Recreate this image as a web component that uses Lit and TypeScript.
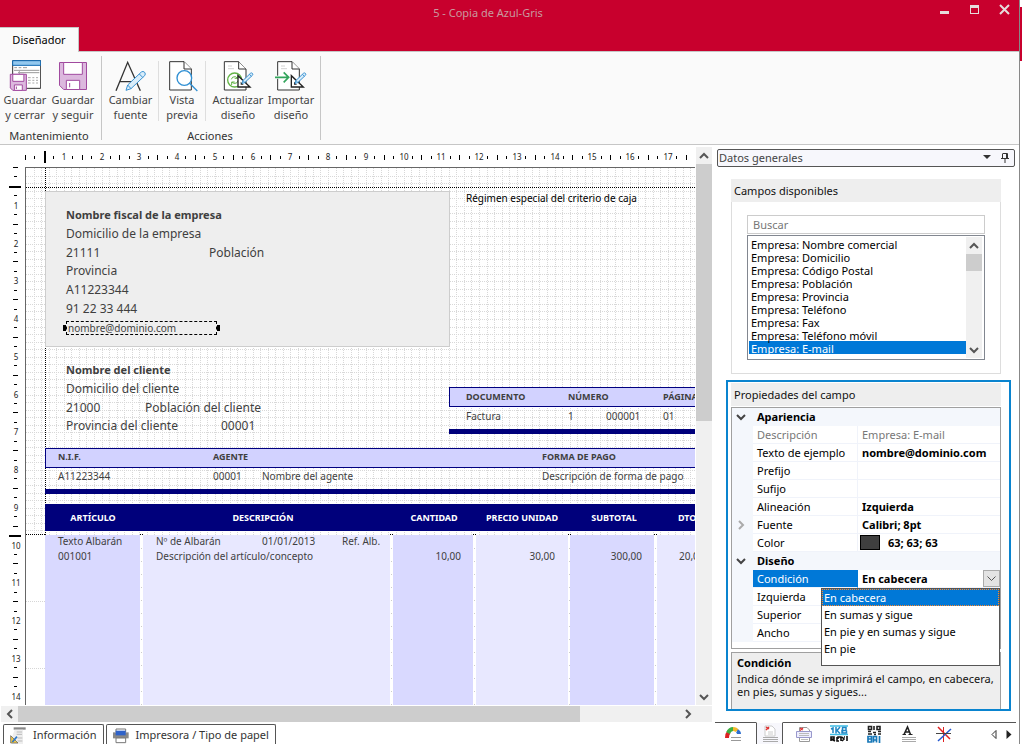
import { LitElement, html, svg, css } from "lit";
import { customElement, state } from "lit/decorators.js";
import { classMap } from "lit/directives/class-map.js";
import { styleMap } from "lit/directives/style-map.js";

/* ---------- shared drawings ---------- */

const floppy = (x: number, y: number, s: number) => svg`
  <g transform="translate(${x} ${y}) scale(${s / 84})" fill="#dcb8de" stroke="#a14a9f" stroke-width=${(3 * 84) / s}>
    <path d="M1.500 1.500H82.500V82.500H14L1.500 70Z" />
    <path d="M14 1.500H70V37H14Z" fill="#fff" />
    <path d="M22 55H62V82.500H22Z" fill="#fff" />
    <path d="M32 63V76" />
  </g>`;

const sheet = (x: number) => svg`
  <path d="M${x} 185h43l22 22v63h-65z" fill="#fff" stroke="#333" stroke-width="3" />
  <path d="M${x + 43} 185v22h22" fill="#fff" stroke="#333" stroke-width="3" />`;

const pencil = (x: number, y: number, s: number) => svg`
  <g transform="translate(${x} ${y}) scale(${s})" fill="#d9edfa" stroke="#3a92d2" stroke-width=${3 / s} stroke-linejoin="round">
    <path d="M0 58L5 42L46 3Q51 -1 56 4Q60 9 56 14L15 53Z" />
    <path d="M5 42L15 53M40 9L50 19" />
  </g>`;

const square = (x: number) => svg`
  <path d="M${x} 227V261H${x + 36}Z" fill="#fff" stroke="#222" stroke-width="4" />
  <path d="M${x + 8} 245V254H${x + 17}Z" fill="#222" />`;

const ICONS: Record<string, unknown> = {
  saveClose: svg`<svg viewBox="27 180 96 96">
    <path d="M38 182H122V265H38Z" fill="#fff" stroke="#333" stroke-width="3" />
    <path d="M38 182H122V196H38Z" fill="#93c8ee" stroke="#1069b2" stroke-width="3" />
    <path d="M43 203h8m5 0h8m5 0h12M42 211H118M54 218H118" stroke="#999" stroke-width="3" fill="none" />
    <path d="M58 211V225M84 233h8m5 0h6m5 0h6M84 241h8m5 0h6m5 0h6M84 249h8m5 0h6m5 0h6" stroke="#aaa" stroke-width="3" />
    ${floppy(30, 222, 50)}</svg>`,
  save: svg`<svg viewBox="171 180 96 96">${floppy(177, 186, 84)}</svg>`,
  font: svg`<svg viewBox="342 180 96 96">
    <path d="M345 272L380 187L418 272M357 245H406" fill="none" stroke="#333" stroke-width="4" />
    ${pencil(375, 213, 1)}</svg>`,
  preview: svg`<svg viewBox="497 180 96 96">
    ${sheet(508)}
    <circle cx="552" cy="234" r="22" fill="#fff" stroke="#2f8fd3" stroke-width="4" />
    <path d="M568 250L591 273" stroke="#2f8fd3" stroke-width="4" /></svg>`,
  refresh: svg`<svg viewBox="666 180 96 96">
    ${sheet(673)}
    <path d="M684 198h12M684 206h18" stroke="#bbb" stroke-width="2" />
    <g fill="none" stroke="#63b446" stroke-width="4">
      <circle cx="704" cy="240" r="21" />
      <path d="M694 238Q696 229 706 230L712 234M713 226V235H704M714 242Q712 252 702 250L696 247M695 255V246H704" stroke-width="3" />
    </g>
    ${square(714)}${pencil(726, 218, 0.56)}</svg>`,
  importar: svg`<svg viewBox="825 180 96 96">
    ${sheet(833)}
    <path d="M843 198h12M843 206h18" stroke="#bbb" stroke-width="2" />
    <path d="M822 232H865M851 216L866 232L851 248" fill="none" stroke="#fff" stroke-width="9" />
    <path d="M825 232H865M851 217L866 232L851 247" fill="none" stroke="#33a55c" stroke-width="5" />
    ${square(874)}${pencil(885, 218, 0.56)}</svg>`,
};

const chevron = (dir: "up" | "down" | "left" | "right") => {
  const d = {
    up: "M1 7L5 3L9 7",
    down: "M1 3L5 7L9 3",
    left: "M7 1L3 5L7 9",
    right: "M3 1L7 5L3 9",
  }[dir];
  return html`<svg class="chev" viewBox="0 0 10 10" width="10" height="10" aria-hidden="true">
    <path d=${d} fill="none" stroke="currentColor" stroke-width="2" />
  </svg>`;
};

const base = css`
  :host {
    box-sizing: border-box;
    font-family: "Noto Sans", "Open Sans", sans-serif;
    font-size: 11px;
    color: #1a1a1a;
  }
  * {
    box-sizing: border-box;
  }
  button,
  input,
  select {
    font: inherit;
    color: inherit;
    margin: 0;
    padding: 0;
    border: 0;
    border-radius: 0;
    background: none;
    outline: none;
  }
  .chev {
    display: block;
    flex: none;
  }
`;

/* ---------- title bar ---------- */

@customElement("title-bar")
export class TitleBar extends LitElement {
  static styles = [
    base,
    css`
      :host {
        display: grid;
        grid-template-columns: 1fr auto 1fr;
        height: 51px;
        background: #c8002d;
      }
      .tab {
        justify-self: start;
        align-self: end;
        height: 25px;
        width: 79px;
        padding: 0 0 2px;
        margin-bottom: -1px;
        background: #fafafa;
        border-top: 1px solid #c6c6c6;
        border-right: 1px solid #c6c6c6;
        color: #000;
        z-index: 1;
      }
      .title {
        margin: 0;
        padding-right: 43px;
        font-size: 11px;
        font-weight: 400;
        line-height: 26px;
        color: #c99a9f;
      }
      .controls {
        display: flex;
        justify-content: flex-end;
        align-items: flex-start;
        gap: 14px;
        padding: 1px 7px 0 0;
      }
      .controls button {
        width: 16px;
        height: 16px;
      }
      svg {
        display: block;
      }
    `,
  ];
  render() {
    return html`
      <button class="tab" role="tab" aria-selected="true">Diseñador</button>
      <h1 class="title">5 - Copia de Azul-Gris</h1>
      <div class="controls">
        <button aria-label="Minimizar">
          <svg width="16" height="16"><path d="M4 10h9v3H4z" fill="#e6dcdc" /></svg>
        </button>
        <button aria-label="Maximizar">
          <svg width="16" height="16"><path d="M4 4h9v9H4zM5 7v5h7V7z" fill="#e6dcdc" fill-rule="evenodd" /></svg>
        </button>
        <button aria-label="Cerrar">
          <svg width="16" height="16"><path d="M4 4L13 13M13 4L4 13" stroke="#e6dcdc" stroke-width="2" /></svg>
        </button>
      </div>
    `;
  }
}

/* ---------- ribbon ---------- */

@customElement("ribbon-bar")
export class RibbonBar extends LitElement {
  static styles = [
    base,
    css`
      :host {
        display: flex;
        height: 94px;
        background: #fafafa;
        border-top: 1px solid #c6c6c6;
        border-bottom: 1px solid #c6c6c6;
      }
      .group {
        display: grid;
        grid-template-rows: 1fr 13px;
        margin: 4px 0;
        border-right: 1px solid #c6c6c6;
        padding-left: 1px;
      }
      .maint {
        padding-right: 4px;
      }
      .actions {
        padding-right: 3px;
      }
      .row {
        display: flex;
      }
      .row button {
        display: flex;
        flex-direction: column;
        align-items: center;
        padding-top: 4px;
        width: 48px;
        line-height: 15px;
        color: #444;
        text-align: center;
      }
      .actions button {
        width: 52px;
        margin-left: 1px;
      }
      .actions button.tight {
        width: 46px;
        margin-left: 0;
      }
      .actions button.first {
        width: 55px;
        margin-left: 0;
      }
      .row svg {
        width: 32px;
        height: 32px;
        display: block;
      }
      .lbl {
        white-space: nowrap;
      }
      .sep {
        width: 1px;
        margin: 5px 0 6px;
        background: #dedede;
      }
      .wide {
        margin-right: 5px;
      }
      .name {
        text-align: center;
        line-height: 17px;
        color: #333;
      }
    `,
  ];
  private btn(icon: string, a: string, b: string, cls = "") {
    return html`<button class=${cls}>${ICONS[icon]}<span class="lbl">${a}<br />${b}</span></button>`;
  }
  render() {
    return html`
      <div class="group maint">
        <div class="row">
          ${this.btn("saveClose", "Guardar", "y cerrar")} ${this.btn("save", "Guardar", "y seguir")}
        </div>
        <div class="name">Mantenimiento</div>
      </div>
      <div class="group actions">
        <div class="row">
          ${this.btn("font", "Cambiar", "fuente", "first")}
          <span class="sep"></span>
          ${this.btn("preview", "Vista", "previa", "tight")}
          <span class="sep wide"></span>
          ${this.btn("refresh", "Actualizar", "diseño")} ${this.btn("importar", "Importar", "diseño")}
        </div>
        <div class="name">Acciones</div>
      </div>
    `;
  }
}

/* ---------- document designer ---------- */

const CM = 37.75;
const GRID = CM / 5;

interface Box {
  x: number;
  y: number;
  w?: number;
  h?: number;
  kind: string;
}
interface Label {
  x: number;
  y: number;
  t: string;
  k?: string;
}

/* A box without a width or a height runs on to that edge of the canvas. */
const BOXES: Box[] = [
  { x: 19, y: 23, w: 405, h: 156, kind: "panel" },
  { x: 423, y: 219, h: 20, kind: "head" },
  { x: 423, y: 261, h: 5, kind: "navy" },
  { x: 19, y: 280, h: 20, kind: "head" },
  { x: 19, y: 321, h: 5, kind: "navy" },
  { x: 19, y: 336, h: 27, kind: "navy" },
  { x: 0, y: 367, kind: "blank" },
  { x: 19, y: 367, w: 95, kind: "dark" },
  { x: 117, y: 367, w: 247, kind: "light" },
  { x: 367, y: 367, w: 80, kind: "dark" },
  { x: 450, y: 367, w: 92, kind: "light" },
  { x: 544, y: 367, w: 84, kind: "dark" },
  { x: 631, y: 367, kind: "light" },
];

const LABELS: Label[] = [
  { x: 440, y: 30, t: "Régimen especial del criterio de caja", k: "small black" },
  { x: 40, y: 47, t: "Nombre fiscal de la empresa", k: "name" },
  { x: 40, y: 66, t: "Domicilio de la empresa" },
  { x: 40, y: 85, t: "21111" },
  { x: 183, y: 85, t: "Población" },
  { x: 40, y: 103, t: "Provincia" },
  { x: 40, y: 122, t: "A11223344" },
  { x: 40, y: 141, t: "91 22 33 444" },
  { x: 40, y: 202, t: "Nombre del cliente", k: "name" },
  { x: 40, y: 221, t: "Domicilio del cliente" },
  { x: 40, y: 240, t: "21000" },
  { x: 119, y: 240, t: "Población del cliente" },
  { x: 40, y: 258, t: "Provincia del cliente" },
  { x: 195, y: 258, t: "00001" },
  { x: 440, y: 229, t: "DOCUMENTO", k: "caps" },
  { x: 542, y: 229, t: "NÚMERO", k: "caps" },
  { x: 637, y: 229, t: "PÁGINA", k: "caps" },
  { x: 440, y: 248, t: "Factura", k: "small" },
  { x: 542, y: 248, t: "1", k: "small" },
  { x: 580, y: 248, t: "000001", k: "small" },
  { x: 637, y: 248, t: "01", k: "small" },
  { x: 32, y: 289, t: "N.I.F.", k: "caps" },
  { x: 187, y: 289, t: "AGENTE", k: "caps" },
  { x: 516, y: 289, t: "FORMA DE PAGO", k: "caps" },
  { x: 32, y: 308, t: "A11223344", k: "small" },
  { x: 187, y: 308, t: "00001", k: "small" },
  { x: 236, y: 308, t: "Nombre del agente", k: "small" },
  { x: 516, y: 308, t: "Descripción de forma de pago", k: "small" },
  { x: 67, y: 350, t: "ARTÍCULO", k: "caps white mid" },
  { x: 237, y: 350, t: "DESCRIPCIÓN", k: "caps white mid" },
  { x: 408, y: 350, t: "CANTIDAD", k: "caps white mid" },
  { x: 496, y: 350, t: "PRECIO UNIDAD", k: "caps white mid" },
  { x: 588, y: 350, t: "SUBTOTAL", k: "caps white mid" },
  { x: 652, y: 350, t: "DTO.", k: "caps white" },
  { x: 32, y: 373, t: "Texto Albarán", k: "small" },
  { x: 32, y: 388, t: "001001", k: "small" },
  { x: 130, y: 373, t: "Nº de Albarán", k: "small" },
  { x: 236, y: 373, t: "01/01/2013", k: "small" },
  { x: 316, y: 373, t: "Ref. Alb.", k: "small" },
  { x: 130, y: 388, t: "Descripción del artículo/concepto", k: "small" },
  { x: 435, y: 388, t: "10,00", k: "small end" },
  { x: 529, y: 388, t: "30,00", k: "small end" },
  { x: 616, y: 388, t: "300,00", k: "small end" },
  { x: 653, y: 388, t: "20,00", k: "small" },
];

@customElement("report-designer")
export class ReportDesigner extends LitElement {
  @state() private wide = 670;
  @state() private tall = 538;
  private watcher?: ResizeObserver;

  static styles = [
    base,
    css`
      :host {
        display: grid;
        grid-template-columns: 25px minmax(0, 1fr) 17px;
        grid-template-rows: 22px minmax(0, 1fr) 17px 22px;
        background: #fff;
        min-width: 0;
        min-height: 0;
      }
      .hruler {
        grid-column: 1 / 3;
        overflow: hidden;
      }
      .vruler {
        overflow: hidden;
      }
      .hruler svg,
      .vruler svg,
      .grid {
        display: block;
      }
      .ruler text {
        font-size: 8px;
        text-anchor: middle;
        fill: #222;
      }
      .canvas {
        position: relative;
        overflow: hidden;
        border-left: 1px solid #666;
        border-top: 1px solid #666;
        background: #fff;
      }
      .box {
        position: absolute;
      }
      .panel {
        background: #eee;
        border: 1px solid #cdcdcd;
      }
      .head {
        background: #d2d2ff;
        border: 1px solid #000080;
        border-right: 0;
      }
      .navy {
        background: #00007b;
      }
      .blank {
        background: #fff;
      }
      .dark {
        background: #d9d9ff;
      }
      .light {
        background: #e8e8ff;
      }
      .field {
        position: absolute;
        margin-top: -8px;
        font-size: 12px;
        line-height: 16px;
        white-space: nowrap;
        color: #3f3f3f;
      }
      .name {
        font-size: 11px;
        font-weight: 700;
      }
      .small {
        font-size: 10px;
      }
      .caps {
        font-size: 9px;
        font-weight: 700;
      }
      .black {
        color: #000;
      }
      .white {
        color: #fff;
      }
      .mid {
        transform: translateX(-50%);
      }
      .end {
        transform: translateX(-100%);
      }
      .picked {
        position: absolute;
        left: 40px;
        top: 153px;
        width: 151px;
        height: 14px;
        border: 1px dashed #000;
        padding-left: 1px;
        line-height: 12px;
        font-size: 10px;
        color: #3f3f3f;
      }
      .picked::before,
      .picked::after {
        content: "";
        position: absolute;
        top: 3px;
        width: 3px;
        height: 6px;
        background: #000;
      }
      .picked::before {
        left: -4px;
      }
      .picked::after {
        right: -4px;
      }
      .vscroll {
        grid-column: 3;
        grid-row: 1 / 3;
        display: grid;
        grid-template-rows: 17px minmax(0, 1fr) 17px;
        margin: 2px 0 0 1px;
        background: #f0f0f0;
        color: #555;
      }
      .hscroll {
        grid-column: 1 / 4;
        display: grid;
        grid-template-columns: 17px minmax(0, 1fr) 17px;
        margin-left: 1px;
        padding-right: 16px;
        border-top: 1px solid #fff;
        background: #f0f0f0;
        color: #555;
      }
      .arrow {
        display: flex;
        align-items: center;
        justify-content: center;
      }
      .thumb {
        background: #cdcdcd;
      }
      .share-y {
        height: 49%;
      }
      .share-x {
        width: 85%;
      }
      .tabs {
        grid-column: 1 / 4;
        display: flex;
        gap: 2px;
        padding: 2px 0 0 3px;
      }
      .tabs button {
        display: flex;
        align-items: center;
        gap: 6px;
        padding: 0 6px 0 5px;
        border: 1px solid #555;
        border-bottom: 0;
        border-radius: 2px 2px 0 0;
        background: #fff;
        color: #333;
        line-height: 20px;
        white-space: nowrap;
      }
    `,
  ];

  firstUpdated() {
    const canvas = this.renderRoot.querySelector(".canvas") as HTMLElement;
    this.watcher = new ResizeObserver(() => {
      this.wide = canvas.clientWidth;
      this.tall = canvas.clientHeight;
    });
    this.watcher.observe(canvas);
  }
  disconnectedCallback() {
    super.disconnectedCallback();
    this.watcher?.disconnect();
  }

  private ruler(vertical: boolean) {
    const marks = [];
    const off = vertical ? 1 : 26;
    const end = vertical ? this.tall : this.wide + 25;
    for (let q = 0; ; q++) {
      const p = Math.round(off + (q * CM) / 4) - 1;
      if (p > end - 4) break;
      if (q === 2 || (vertical && q === 39)) {
        marks.push(
          vertical
            ? svg`<rect x="9" y=${p} width="12" height="2" />`
            : svg`<rect x=${p} y="6" width="2" height="12" />`
        );
      } else if (q % 4 === 0 && q > 0) {
        marks.push(
          vertical
            ? svg`<text x="16" y=${p + 4}>${q / 4}</text>`
            : svg`<text x=${p + 1} y="15">${q / 4}</text>`
        );
      } else {
        const len = q % 2 === 0 ? 5 : 3;
        const start = q % 2 === 0 ? 0 : 1;
        marks.push(
          vertical
            ? svg`<rect x=${13 + start} y=${p} width=${len} height="1" />`
            : svg`<rect x=${p} y=${10 + start} width="1" height=${len} />`
        );
      }
    }
    return marks;
  }

  private grid() {
    const lines = [];
    for (let i = 1; i * GRID < Math.max(this.wide, 367); i++) {
      const p = Math.round(i * GRID) + 0.5;
      lines.push(svg`<path d="M${p} 0V367" />`);
      if (p < 367) lines.push(svg`<path d="M0 ${p}H${this.wide}" />`);
    }
    return lines;
  }

  render() {
    const gaps = [114, 364, 447, 542, 628];
    const w = this.wide;
    const h = this.tall;
    return html`
      <div class="hruler ruler"><svg width=${w + 25} height="22">${this.ruler(false)}</svg></div>
      <div class="vruler ruler"><svg width="25" height=${h}>${this.ruler(true)}</svg></div>
      <div class="canvas">
        <svg class="grid" width=${w} height=${h}>
          <g stroke="#d8d8d8" stroke-dasharray="1 1" fill="none">${this.grid()}</g>
          <path d="M0 19.500H${w}M19.500 0V367" stroke="#000" stroke-dasharray="1 1" fill="none" />
        </svg>
        ${BOXES.map(
          (b) => html`<div
            class="box ${b.kind}"
            style=${styleMap({
              left: `${b.x}px`,
              top: `${b.y}px`,
              ...(b.h ? { height: `${b.h}px` } : { bottom: "0" }),
              ...(b.w ? { width: `${b.w}px` } : { right: "0" }),
            })}
          ></div>`
        )}
        <svg class="box" style=${styleMap({ left: "0", top: "366px" })} width=${w} height=${Math.max(h - 366, 0)}>
          <path d="M0 0.500H19" stroke="#000" stroke-dasharray="1 1" />
          <path d="M0 67.500H19M0 134.500H19" stroke="#d6d6d6" stroke-dasharray="1 1" />
          ${gaps.map(
            (g) => svg`<path d="M${g} 0.500h3" stroke="#000" stroke-dasharray="1 1" />
              <path d="M${g + 1.5} 14V400" stroke="#ccc" stroke-dasharray="1 12" />`
          )}
        </svg>
        ${LABELS.map(
          (l) => html`<span class="field ${l.k ?? ""}" style=${styleMap({ left: `${l.x}px`, top: `${l.y}px` })}
            >${l.t}</span
          >`
        )}
        <div class="picked">nombre@dominio.com</div>
      </div>
      <div class="vscroll">
        <button class="arrow" aria-label="Subir">${chevron("up")}</button>
        <div><div class="thumb share-y"></div></div>
        <button class="arrow" aria-label="Bajar">${chevron("down")}</button>
      </div>
      <div class="hscroll">
        <button class="arrow" aria-label="Izquierda">${chevron("left")}</button>
        <div class="thumb share-x"></div>
        <button class="arrow" aria-label="Derecha">${chevron("right")}</button>
      </div>
      <div class="tabs">
        <button>
          <svg width="18" height="18" viewBox="24 588 54 54">
            <path d="M38 592H74V599H38Z" fill="#888" />
            <path d="M41 599H66V642H33V620Z" fill="#eee" />
            <path d="M47 606h16M47 613h16M50 624h14M50 633h14" stroke="#bbb" stroke-width="3" />
            <path d="M29 617L51 639H29Z" fill="#f2c94c" stroke="#555" stroke-width="2" />
            <path d="M34 636L48 620" stroke="#2a76c6" stroke-width="5" />
          </svg>
          Información
        </button>
        <button>
          <svg width="18" height="18" viewBox="322 588 54 54">
            <path d="M334 597H363V606H334Z" fill="#fff" stroke="#777" stroke-width="3" />
            <path d="M325 607H372V625H325Z" fill="#888" />
            <path d="M333 602H363V616H333Z" fill="#2f62c9" />
            <path d="M334 624H363V638H334Z" fill="#fff" stroke="#777" stroke-width="3" />
          </svg>
          Impresora / Tipo de papel
        </button>
      </div>
    `;
  }
}

/* ---------- side panel ---------- */

const FIELDS = [
  "Nombre comercial",
  "Domicilio",
  "Código Postal",
  "Población",
  "Provincia",
  "Teléfono",
  "Fax",
  "Teléfono móvil",
  "E-mail",
  "E-mail comercial",
];
const CHOICES = ["En cabecera", "En sumas y sigue", "En pie y en sumas y sigue", "En pie"];

@customElement("field-panel")
export class FieldPanel extends LitElement {
  @state() private choice = 0;
  static styles = [
    base,
    css`
      :host {
        display: flex;
        flex-direction: column;
        min-height: 0;
        background: #fff;
      }
      .bar {
        display: flex;
        align-items: center;
        flex: none;
        height: 18px;
        margin: 4px 4px 0 5px;
        padding: 0 0 1px 1px;
        border: 1px solid #555;
        border-radius: 2px;
        background: #f7f7fc;
        color: #444;
      }
      .bar span {
        flex: 1;
        line-height: 15px;
      }
      .bar button {
        width: 18px;
        height: 14px;
      }
      .bar svg {
        display: block;
        margin: auto;
      }
      h2 {
        margin: 0;
        padding-left: 3px;
        font-size: 11px;
        font-weight: 400;
        line-height: 23px;
        background: #eee;
        color: #111;
      }
      .avail {
        margin: 12px 18px 0 19px;
        border: 1px solid #ddd;
        border-top: 0;
      }
      .avail h2 {
        margin: 0 -1px;
      }
      .inner {
        padding: 13px 15px 13px;
      }
      .search {
        display: block;
        width: 100%;
        height: 19px;
        padding: 0 5px 1px;
        border: 1px solid #ccc;
        background: #fff;
      }
      .search::placeholder {
        color: #777;
        opacity: 1;
      }
      .list {
        display: grid;
        grid-template-columns: minmax(0, 1fr) 16px;
        height: 125px;
        margin-top: 1px;
        padding: 1px 2px 1px 1px;
        border: 1px solid #828790;
      }
      .list select {
        height: 121px;
        overflow: hidden;
        scrollbar-width: none;
        color: #000;
      }
      .list option {
        height: 13px;
        min-height: 13px;
        line-height: 11px;
        padding: 0 2px 2px;
        font-size: 11px;
      }
      .list option:checked {
        background: linear-gradient(#0078d7, #0078d7);
        color: #fff;
      }
      .scroll {
        display: grid;
        grid-template-rows: 17px 1fr 17px;
        background: #f0f0f0;
        color: #555;
      }
      .scroll button {
        display: flex;
        align-items: center;
        justify-content: center;
      }
      .thumb {
        height: 17px;
        background: #cdcdcd;
      }
      .props {
        display: flex;
        flex-direction: column;
        flex: none;
        height: 331px;
        margin: 6px 8px 0 14px;
        padding: 1px 8px 0 3px;
        border: 2px solid #0a84cf;
      }
      .pgrid {
        margin-top: 1px;
        padding-bottom: 6px;
        border: 1px solid #a0a0a0;
        background: #fff;
        position: relative;
      }
      .cat,
      .prop {
        display: grid;
        grid-template-columns: 21px 105px minmax(0, 1fr);
        height: 18px;
        line-height: 17px;
        color: #000;
      }
      .cat {
        background: #f4f7fc;
        font-weight: 700;
      }
      .tog {
        display: flex;
        align-items: center;
        justify-content: center;
        padding-right: 3px;
        background: #f4f7fc;
        color: #444;
      }
      .tog.faint {
        color: #aaa;
      }
      .cat span,
      .prop label {
        padding-left: 4px;
        white-space: nowrap;
      }
      .prop label {
        border-bottom: 1px solid #f0f3fa;
        border-right: 1px solid #f0f3fa;
      }
      .val {
        display: flex;
        border-bottom: 1px solid #f0f3fa;
        padding-left: 4px;
      }
      .val input,
      .val select {
        flex: 1;
        min-width: 0;
        height: 17px;
        font-weight: 700;
        appearance: none;
      }
      .prop.dim {
        color: #777;
      }
      .prop.dim input {
        font-weight: 400;
      }
      .on label {
        background: #0078d7;
        border-right-color: #0078d7;
        color: #fff;
      }
      .val button {
        width: 17px;
        height: 17px;
        display: flex;
        align-items: center;
        justify-content: center;
        border: 1px solid #aaa;
        background: #e3e3e3;
        color: #555;
      }
      .swatch {
        width: 20px;
        height: 15px;
        margin: 1px 8px 0 -2px;
        background: #3f3f3f;
        border: 1px solid #000;
      }
      .menu {
        position: absolute;
        z-index: 2;
        top: 180px;
        right: 0;
        width: 179px;
        height: 78px;
        border: 1px solid #555;
        background: #fff;
      }
      .menu button {
        display: block;
        width: 100%;
        height: 17px;
        padding-left: 2px;
        line-height: 16px;
        text-align: left;
        color: #000;
      }
      .menu button.sel {
        background: #0078d7;
        color: #fff;
        outline: 1px dotted #ff8728;
        outline-offset: -1px;
      }
      .help {
        flex: 1;
        margin-top: 3px;
        padding: 1px 5px;
        border: 1px solid #a0a0a0;
        border-bottom: 0;
        background: #eee;
        color: #111;
      }
      .help p,
      .help h3 {
        margin: 0;
        font-size: 11px;
        line-height: 13px;
      }
      .help h3 {
        line-height: 18px;
        color: #000;
      }
      .pages {
        display: flex;
        align-items: flex-start;
        flex: none;
        height: 22px;
        margin: auto 3px 0 3px;
        border-top: 1px solid #555;
      }
      .pages button {
        flex: none;
        width: 35px;
        height: 22px;
        display: flex;
        justify-content: center;
        align-items: center;
      }
      .pages .cur {
        width: 27px;
        margin: -1px 3px 0 6px;
        border: 1px solid #555;
        border-top-color: #fff;
        border-bottom: 0;
        background: #f7f7fc;
      }
      .pages .nav {
        width: 15px;
      }
      .pages .fill {
        flex: 1;
      }
    `,
  ];

  private row(name: string, value = "", opt: { dim?: boolean; tog?: boolean; swatch?: boolean } = {}) {
    const id = name.toLowerCase().replace(/\W/g, "");
    return html`<div class="prop ${classMap({ dim: !!opt.dim })}">
      <span class="tog faint">${opt.tog ? chevron("right") : ""}</span>
      <label for=${id}>${name}</label>
      <div class="val">
        ${opt.swatch ? html`<i class="swatch"></i>` : ""}
        <input id=${id} .value=${value} ?readonly=${!!opt.dim} />
      </div>
    </div>`;
  }
  private cat(name: string) {
    return html`<div class="cat"><button class="tog" aria-label="Contraer">${chevron("down")}</button><span>${name}</span></div>`;
  }

  render() {
    return html`
      <div class="bar">
        <span>Datos generales</span>
        <button aria-label="Opciones">
          <svg width="8" height="5"><path d="M0 0H8L4 4Z" fill="#333" /></svg>
        </button>
        <button aria-label="Fijar">
          <svg width="8" height="10"><path d="M2 0.500H6.500V5.500H1.500V0.500M5.500 1V5M0 5.500H8M4 6V10" fill="none" stroke="#333" /></svg>
        </button>
      </div>

      <section class="avail">
        <h2>Campos disponibles</h2>
        <div class="inner">
          <input class="search" placeholder="Buscar" aria-label="Buscar" />
          <div class="list">
            <select size="9" aria-label="Campos disponibles">
              ${FIELDS.map((f) => html`<option ?selected=${f === "E-mail"}>Empresa: ${f}</option>`)}
            </select>
            <div class="scroll">
              <button aria-label="Subir">${chevron("up")}</button>
              <div><div class="thumb"></div></div>
              <button aria-label="Bajar">${chevron("down")}</button>
            </div>
          </div>
        </div>
      </section>

      <section class="props">
        <h2>Propiedades del campo</h2>
        <div class="pgrid">
          ${this.cat("Apariencia")} ${this.row("Descripción", "Empresa: E-mail", { dim: true })}
          ${this.row("Texto de ejemplo", "nombre@dominio.com")} ${this.row("Prefijo")} ${this.row("Sufijo")}
          ${this.row("Alineación", "Izquierda")} ${this.row("Fuente", "Calibri; 8pt", { tog: true })}
          ${this.row("Color", "63; 63; 63", { swatch: true })} ${this.cat("Diseño")}
          <div class="prop on">
            <span class="tog"></span>
            <label for="cond">Condición</label>
            <div class="val">
              <select id="cond" .value=${CHOICES[this.choice]}>
                ${CHOICES.map((c, i) => html`<option ?selected=${i === this.choice}>${c}</option>`)}
              </select>
              <button aria-label="Desplegar">
                <svg width="9" height="6"><path d="M0.500 0.500L4.500 4.500L8.500 0.500" fill="none" stroke="#555" /></svg>
              </button>
            </div>
          </div>
          ${this.row("Izquierda")} ${this.row("Superior")} ${this.row("Ancho")}
          <div class="menu" role="listbox">
            ${CHOICES.map(
              (c, i) => html`<button
                role="option"
                aria-selected=${i === this.choice}
                class=${classMap({ sel: i === this.choice })}
                @click=${() => (this.choice = i)}
              >
                ${c}
              </button>`
            )}
          </div>
        </div>
        <div class="help">
          <h3>Condición</h3>
          <p>Indica dónde se imprimirá el campo, en cabecera, en pies, sumas y sigues...</p>
        </div>
      </section>

      <div class="pages">
        <button aria-label="General">
          <svg width="18" height="18" viewBox="0 0 18 18">
            <path d="M3 13Q3 9 5 7" fill="none" stroke="#d22" stroke-width="4" />
            <path d="M4 8Q6 4 9 4" fill="none" stroke="#3cb043" stroke-width="4" />
            <path d="M9 4Q12 4 13 6" fill="none" stroke="#f4b82c" stroke-width="4" />
            <path d="M13 6Q15 7 15 9" fill="none" stroke="#2f6fd0" stroke-width="4" />
            <path d="M6 10H18V18H6Z" fill="#fff" />
            <path d="M7 12.500H17M7 15.500H17" stroke="#999" />
          </svg>
        </button>
        <button class="cur" aria-label="Documento">
          <svg width="18" height="18" viewBox="0 0 18 18">
            <path d="M4 1H11L14 4V11H4Z" fill="#fff" stroke="#ccc" />
            <path d="M5 2L8 4M5 5L8 2" stroke="#d33" stroke-width="1.500" />
            <path d="M7 7H12M7 9H12" stroke="#ccc" />
            <path d="M2 12.500H17M2 14.500H17M2 16.500H17" stroke="#aaa" />
          </svg>
        </button>
        <button aria-label="Página">
          <svg width="18" height="18" viewBox="0 0 18 18">
            <path d="M4.500 2.500H12L14.500 5V16.500H4.500Z" fill="#fff" stroke="#999" />
            <path d="M5 3L8 5M5 5.500L8 3" stroke="#d33" stroke-width="1.200" />
            <path d="M1.500 6.500H16.500V12.500H1.500Z" fill="#eef" stroke="#99c" />
            <path d="M4 8.500H14M4 10.500H14M6 14.500H13" stroke="#bbb" />
          </svg>
        </button>
        <button aria-label="Código de barras">
          <svg width="18" height="18" viewBox="0 0 18 18">
            <path d="M0 1H18M0 9.500H18" stroke="#3cbde6" stroke-width="1.500" />
            <path d="M1 4L3 3V8M6 2V8.500M10 2L7 5.500L10 8.500M12 2.500H16V5.500H12V8H16.500V5.500M12.500 2.500V8" fill="none" stroke="#1f86c4" stroke-width="1.500" />
            <path d="M1 16V12H4V14H1L5 16M7 12V16H9M8 14V12H11V16M12 12L14 14L12 16M14 12H15M17 11V16" fill="none" stroke="#111" stroke-width="1.600" />
          </svg>
        </button>
        <button aria-label="Código QR">
          <svg width="18" height="18" viewBox="0 0 18 18">
            <path d="M3.500 1.500h3v3h-3zM12 1.500h3v3h-3zM9 1v4M3 6.500h3M8 7.500h3M13 6.500h3M3 9h4M9 9.500h2M13 9h3" fill="none" stroke="#222" stroke-width="1.600" />
            <path d="M3 11.500V17H6.500V11.500ZM3 14H6.500M8.500 17.500V11.500H11.500V17.500M8.500 15H11.500M14.500 11V18" fill="none" stroke="#1878b8" stroke-width="1.700" />
          </svg>
        </button>
        <button aria-label="Texto">
          <svg width="18" height="18" viewBox="0 0 18 18">
            <path d="M4 9.500L7.500 2L10.500 9.500M5 7H10" fill="none" stroke="#222" stroke-width="1.600" />
            <path d="M2.500 9.500H6M8.500 9.500H12.500" stroke="#222" stroke-width="1.200" />
            <path d="M2 12.500H16M2 14.500H16M2 16.500H16" stroke="#aaa" />
          </svg>
        </button>
        <button aria-label="Líneas">
          <svg width="18" height="18" viewBox="0 0 18 18">
            <path d="M8.500 2V17" stroke="#e02020" />
            <path d="M3 2L15 14" stroke="#e02020" stroke-width="1.500" />
            <path d="M16 4L3 16" stroke="#2458d0" stroke-width="1.500" />
            <path d="M1 8.500H16" stroke="#444" />
          </svg>
        </button>
        <span class="fill"></span>
        <button class="nav" aria-label="Anterior">
          <svg width="6" height="9"><path d="M5 0.500V8.500L1 4.500Z" fill="#fff" stroke="#333" /></svg>
        </button>
        <button class="nav" aria-label="Siguiente">
          <svg width="6" height="9"><path d="M0.500 0V9L5.500 4.500Z" fill="#222" /></svg>
        </button>
      </div>
    `;
  }
}

/* ---------- application ---------- */

@customElement("app-root")
export class AppRoot extends LitElement {
  static styles = css`
    :host {
      display: grid;
      grid-template-columns: minmax(0, 1fr) 2px;
      grid-template-rows: minmax(0, 1fr);
      height: 100vh;
      overflow: hidden;
      background: #fff;
    }
    .window {
      display: flex;
      flex-direction: column;
      min-height: 0;
      border-right: 1px solid #888;
    }
    title-bar,
    ribbon-bar {
      flex: none;
    }
    .work {
      flex: 1;
      min-height: 0;
      display: grid;
      grid-template-columns: minmax(0, 1fr) 307px;
      grid-template-rows: minmax(0, 1fr);
    }
    .behind {
      margin-top: 7px;
      height: 54px;
      background: #c8002d;
    }
  `;
  render() {
    return html`
      <div class="window">
        <title-bar></title-bar>
        <ribbon-bar></ribbon-bar>
        <div class="work">
          <report-designer></report-designer>
          <field-panel></field-panel>
        </div>
      </div>
      <div class="behind"></div>
    `;
  }
}
